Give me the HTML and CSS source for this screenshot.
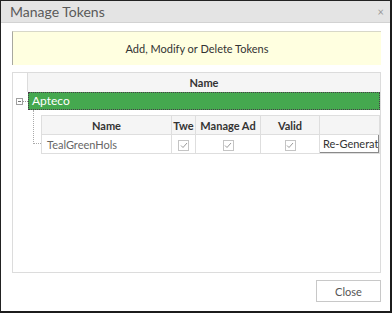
FILE: index.html
```html
<!DOCTYPE html>
<html lang="en">
<head>
    <meta charset="UTF-8">
    <meta name="viewport" content="width=device-width, initial-scale=1.0">
    <title>Manage Tokens</title>
    <link rel="stylesheet" href="styles.css">
</head>
<body>
    <div class="dialog">
        <div class="titlebar">
            <span class="title">Manage Tokens</span>
            <span class="close-x">×</span>
        </div>
        <div class="content">
            <div class="notice">Add, Modify or Delete Tokens</div>
            <div class="grid">
                <div class="grid-head">
                    <div class="gutter"></div>
                    <div class="head-name">Name</div>
                </div>
                <div class="group-row">
                    <div class="expander">
                        <span class="minus"></span>
                        <span class="stub"></span>
                    </div>
                    <div class="group-label">Apteco</div>
                </div>
                <div class="detail">
                    <div class="connector"></div>
                    <table class="tokens">
                        <colgroup>
                            <col class="c-name">
                            <col class="c-twe">
                            <col class="c-manage">
                            <col class="c-valid">
                            <col class="c-action">
                        </colgroup>
                        <thead>
                            <tr>
                                <th>Name</th>
                                <th>Twe</th>
                                <th>Manage Ad</th>
                                <th>Valid</th>
                                <th></th>
                            </tr>
                        </thead>
                        <tbody>
                            <tr>
                                <td class="token-name">TealGreenHols</td>
                                <td class="check"><span class="box"><svg width="8" height="7" viewBox="0 0 8 7"><path d="M1 3.5 L3 5.5 L7 1" fill="none" stroke="#9a9a9a" stroke-width="1"/></svg></span></td>
                                <td class="check"><span class="box"><svg width="8" height="7" viewBox="0 0 8 7"><path d="M1 3.5 L3 5.5 L7 1" fill="none" stroke="#9a9a9a" stroke-width="1"/></svg></span></td>
                                <td class="check"><span class="box"><svg width="8" height="7" viewBox="0 0 8 7"><path d="M1 3.5 L3 5.5 L7 1" fill="none" stroke="#9a9a9a" stroke-width="1"/></svg></span></td>
                                <td class="action"><button class="regen-btn">Re-Generat</button></td>
                            </tr>
                        </tbody>
                    </table>
                </div>
            </div>
        </div>
        <div class="footer">
            <button class="close-btn">Close</button>
        </div>
    </div>
</body>
</html>
```

FILE: styles.css
```css
body {
    margin: 0;
    font-family: Lato, "Open Sans", sans-serif;
    font-size: 11px;
    color: #333;
    background: #fff;
}
.dialog {
    width: 392px;
    height: 313px;
    box-sizing: border-box;
    border-top: 1px solid #222;
    border-left: 1px solid #222;
    border-right: 2px solid #1c1c1c;
    border-bottom: 2px solid #1c1c1c;
    display: flex;
    flex-direction: column;
    background: #fff;
}
.titlebar {
    height: 21px;
    background: #e4e4e4;
    border-bottom: 1px solid #d2d2d2;
    display: flex;
    align-items: center;
    justify-content: space-between;
    padding: 0 6px 0 9px;
}
.title {
    font-size: 14px;
    color: #5a5a5a;
}
.close-x {
    font-size: 11px;
    color: #999;
}
.content {
    flex: 1;
    display: flex;
    flex-direction: column;
    padding: 8px 9px 0 11px;
}
.notice {
    height: 33px;
    background: #ffffe0;
    border-top: 1px solid #d8d8c8;
    border-left: 1px solid #a8a8a0;
    display: flex;
    align-items: center;
    justify-content: center;
    color: #333;
}
.grid {
    flex: 1;
    margin-top: 7px;
    border: 1px solid #dcdcdc;
}
.grid-head {
    display: flex;
    height: 19px;
}
.gutter {
    width: 14px;
    border-right: 1px solid #dcdcdc;
}
.head-name {
    flex: 1;
    background: #f5f5f5;
    font-weight: bold;
    text-align: center;
    line-height: 19px;
    color: #333;
}
.group-row {
    display: flex;
    height: 18px;
}
.expander {
    width: 15px;
    display: flex;
    align-items: center;
    padding-left: 3px;
    box-sizing: border-box;
}
.minus {
    width: 5px;
    height: 5px;
    border: 1px solid #a0a0a0;
    background: linear-gradient(#777, #777) center / 3px 1px no-repeat;
}
.stub {
    flex: 1;
    border-top: 1px dotted #999;
}
.group-label {
    flex: 1;
    background: #45a84f;
    border: 1px dotted #4a3a4a;
    color: #fff;
    padding-left: 3px;
    line-height: 16px;
    font-size: 12px;
}
.detail {
    display: flex;
    align-items: flex-start;
    padding-left: 20px;
}
.connector {
    width: 7px;
    height: 33px;
    border-left: 1px dotted #aaa;
    border-bottom: 1px dotted #aaa;
    flex-shrink: 0;
}
.tokens {
    margin-top: 5px;
    border-collapse: collapse;
    table-layout: fixed;
    width: 338px;
}
.c-name { width: 130px; }
.c-twe { width: 24px; }
.c-manage { width: 65px; }
.c-valid { width: 59px; }
.c-action { width: 60px; }
.tokens th,
.tokens td {
    border: 1px solid #dedede;
    height: 18px;
    padding: 0;
}
.tokens th {
    background: #f5f5f5;
    font-weight: bold;
    color: #333;
    text-align: center;
    white-space: nowrap;
    overflow: hidden;
}
.token-name {
    color: #666;
    padding-left: 5px !important;
}
.check {
    text-align: center;
}
.box {
    display: inline-flex;
    width: 9px;
    height: 9px;
    border: 1px solid #c4c4c4;
    align-items: center;
    justify-content: center;
    vertical-align: middle;
}
.action {
    overflow: hidden;
}
.regen-btn {
    display: block;
    width: 60px;
    height: 19px;
    margin: -1px 0 0 -1px;
    border: 1px solid #8a8a8a;
    background: #fff;
    font-family: inherit;
    font-size: 11px;
    color: #333;
    padding: 0 0 0 3px;
    text-align: left;
    white-space: nowrap;
    overflow: hidden;
}
.footer {
    display: flex;
    justify-content: flex-end;
    padding: 7px 9px 9px 0;
}
.close-btn {
    width: 65px;
    height: 22px;
    border: 1px solid #c8c8c8;
    background: #fff;
    font-family: inherit;
    font-size: 11px;
    color: #555;
}
```
